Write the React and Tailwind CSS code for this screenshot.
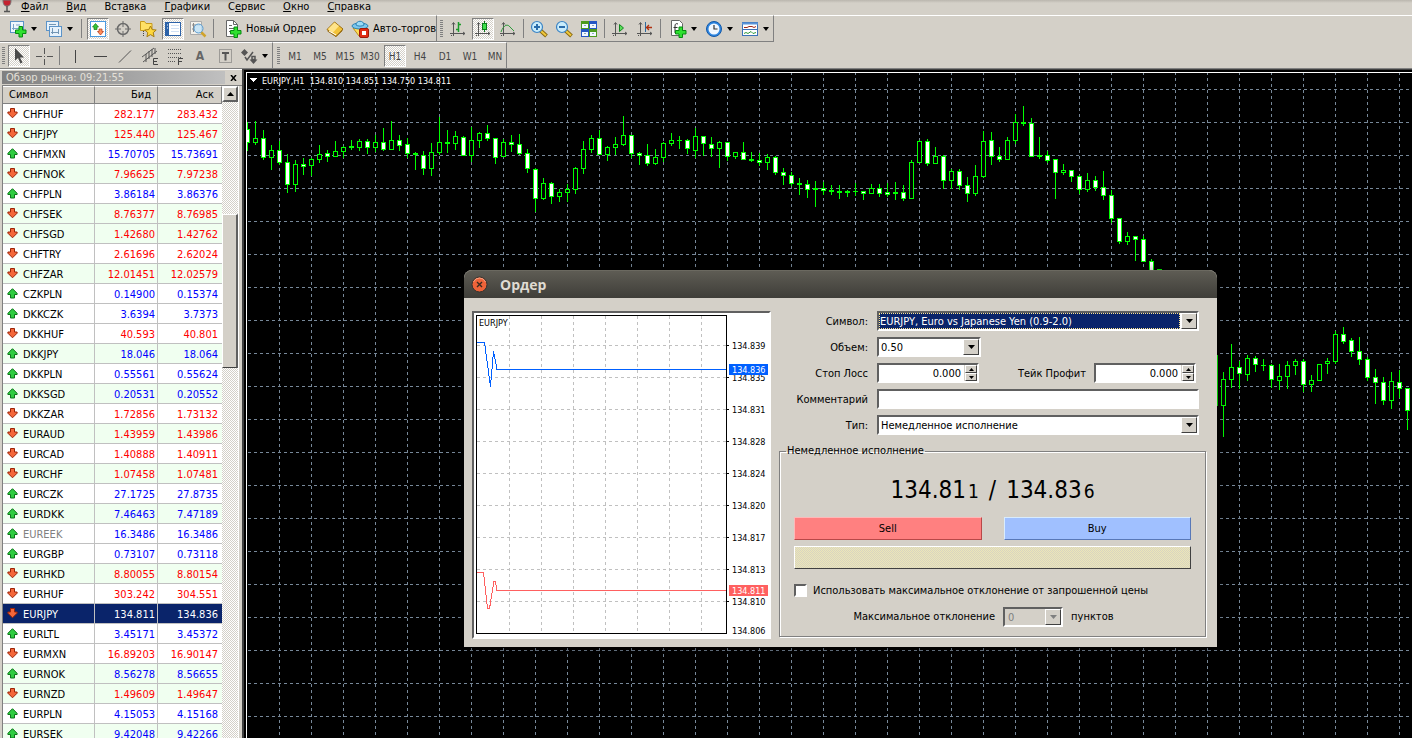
import { useState } from 'react';

// symbol, bid, ask, direction, row tint
const quotes = [
  ['CHFHUF', '282.177', '283.432', 'down', false],
  ['CHFJPY', '125.440', '125.467', 'down', true],
  ['CHFMXN', '15.70705', '15.73691', 'up', false],
  ['CHFNOK', '7.96625', '7.97238', 'down', true],
  ['CHFPLN', '3.86184', '3.86376', 'up', false],
  ['CHFSEK', '8.76377', '8.76985', 'down', true],
  ['CHFSGD', '1.42680', '1.42762', 'down', true],
  ['CHFTRY', '2.61696', '2.62024', 'down', false],
  ['CHFZAR', '12.01451', '12.02579', 'down', true],
  ['CZKPLN', '0.14900', '0.15374', 'up', false],
  ['DKKCZK', '3.6394', '3.7373', 'up', false],
  ['DKKHUF', '40.593', '40.801', 'down', false],
  ['DKKJPY', '18.046', '18.064', 'up', true],
  ['DKKPLN', '0.55561', '0.55624', 'up', false],
  ['DKKSGD', '0.20531', '0.20552', 'up', true],
  ['DKKZAR', '1.72856', '1.73132', 'down', false],
  ['EURAUD', '1.43959', '1.43986', 'down', true],
  ['EURCAD', '1.40888', '1.40911', 'down', false],
  ['EURCHF', '1.07458', '1.07481', 'down', true],
  ['EURCZK', '27.1725', '27.8735', 'up', false],
  ['EURDKK', '7.46463', '7.47189', 'up', true],
  ['EUREEK', '16.3486', '16.3486', 'up', false],
  ['EURGBP', '0.73107', '0.73118', 'up', false],
  ['EURHKD', '8.80055', '8.80154', 'down', true],
  ['EURHUF', '303.242', '304.551', 'down', false],
  ['EURJPY', '134.811', '134.836', 'down', false],
  ['EURLTL', '3.45171', '3.45372', 'up', false],
  ['EURMXN', '16.89203', '16.90147', 'down', false],
  ['EURNOK', '8.56278', '8.56655', 'up', true],
  ['EURNZD', '1.49609', '1.49647', 'down', true],
  ['EURPLN', '4.15053', '4.15168', 'up', false],
  ['EURSEK', '9.42048', '9.42266', 'up', true],
];

// [high, body top, body bottom, low, closed lower], three points to a pixel
const candles = [
  [97, 117, 159, 183, 1], [93, 144, 159, 165, 0], [120, 144, 204, 210, 1], [165, 180, 204, 240, 0],
  [152, 180, 219, 225, 1], [192, 216, 285, 309, 1], [210, 222, 285, 306, 0], [204, 222, 231, 255, 1],
  [204, 207, 228, 258, 0], [165, 192, 210, 219, 0], [180, 189, 201, 216, 1], [153, 183, 201, 201, 0],
  [168, 171, 186, 204, 0], [150, 168, 174, 180, 0], [147, 153, 174, 183, 0], [147, 153, 174, 192, 1],
  [135, 156, 174, 186, 0], [114, 156, 180, 183, 1], [93, 150, 180, 180, 0], [135, 150, 168, 183, 1],
  [144, 162, 192, 204, 1], [186, 189, 195, 240, 1], [183, 195, 237, 255, 1], [159, 186, 237, 258, 0],
  [80, 156, 189, 195, 0], [120, 156, 162, 189, 0], [123, 138, 162, 180, 0], [138, 141, 198, 198, 1],
  [110, 150, 198, 216, 0], [126, 129, 153, 174, 0], [105, 129, 147, 153, 1], [144, 144, 204, 222, 1],
  [147, 156, 201, 201, 0], [135, 156, 165, 186, 1], [132, 162, 192, 195, 1], [177, 189, 237, 249, 1],
  [234, 237, 327, 366, 1], [264, 279, 327, 330, 0], [276, 279, 321, 342, 1], [297, 306, 321, 336, 0],
  [282, 297, 309, 336, 0], [231, 234, 300, 312, 0], [153, 177, 237, 252, 0], [135, 144, 180, 189, 0],
  [120, 144, 195, 195, 1], [168, 171, 195, 213, 0], [141, 162, 174, 195, 0], [78, 135, 165, 168, 0],
  [135, 135, 192, 204, 1], [186, 189, 198, 225, 1], [162, 195, 222, 228, 1], [177, 201, 222, 225, 0],
  [156, 159, 204, 216, 0], [129, 150, 162, 168, 0], [138, 150, 153, 177, 0], [147, 150, 177, 192, 1],
  [114, 138, 183, 204, 0], [138, 138, 162, 198, 1], [141, 162, 177, 201, 1], [153, 156, 177, 234, 0],
  [156, 156, 201, 213, 1], [186, 186, 201, 207, 0], [156, 186, 210, 210, 1], [186, 207, 213, 216, 0],
  [189, 210, 219, 228, 1], [192, 201, 219, 240, 0], [198, 201, 249, 255, 1], [234, 246, 258, 285, 1],
  [246, 255, 282, 288, 1], [264, 279, 285, 315, 0], [270, 282, 300, 324, 1], [273, 294, 300, 351, 0],
  [276, 294, 303, 315, 1], [285, 300, 306, 315, 0], [285, 303, 309, 327, 0], [300, 303, 309, 321, 0],
  [279, 303, 306, 318, 0], [303, 303, 312, 330, 1], [282, 294, 312, 312, 0], [282, 294, 312, 321, 1],
  [279, 306, 315, 321, 1], [276, 306, 312, 330, 0], [285, 306, 327, 333, 1], [210, 216, 327, 327, 0],
  [150, 153, 219, 219, 0], [147, 153, 222, 228, 1], [171, 198, 222, 222, 0], [195, 198, 273, 297, 1],
  [237, 243, 273, 297, 0], [237, 243, 288, 300, 1], [261, 285, 312, 336, 1], [225, 258, 312, 318, 0],
  [123, 153, 261, 264, 0], [126, 150, 201, 225, 1], [171, 198, 210, 216, 1], [141, 150, 210, 210, 0],
  [72, 96, 153, 162, 0], [48, 96, 102, 108, 0], [84, 99, 201, 201, 1], [141, 195, 201, 207, 0],
  [183, 195, 213, 219, 1], [207, 207, 249, 327, 1], [222, 240, 249, 255, 0], [240, 240, 261, 276, 1],
  [255, 258, 300, 312, 1], [249, 270, 300, 306, 0], [258, 270, 294, 303, 1], [243, 291, 318, 330, 1],
  [300, 315, 387, 399, 1], [384, 384, 456, 462, 1], [426, 438, 456, 465, 0], [438, 438, 450, 513, 1],
  [438, 447, 516, 516, 1], [507, 513, 560, 590, 1], [537, 537, 600, 630, 0], [570, 600, 660, 690, 1],
  [630, 660, 720, 740, 1], [690, 720, 780, 800, 1], [740, 780, 810, 860, 1], [780, 800, 840, 900, 0],
  [790, 810, 860, 930, 1], [780, 795, 948, 960, 1], [846, 867, 948, 1041, 0], [762, 831, 870, 894, 0],
  [813, 831, 852, 897, 1], [795, 804, 855, 873, 0], [798, 804, 825, 846, 1], [807, 825, 828, 843, 0],
  [822, 825, 870, 894, 1], [822, 858, 873, 900, 0], [813, 825, 861, 897, 0], [807, 813, 828, 855, 0],
  [807, 813, 885, 906, 1], [855, 870, 885, 906, 0], [822, 822, 873, 873, 0], [804, 813, 822, 852, 0],
  [723, 732, 816, 822, 0], [711, 732, 756, 762, 1], [744, 750, 786, 801, 1], [741, 783, 810, 825, 1],
  [801, 807, 864, 873, 1], [837, 861, 879, 942, 1], [861, 876, 933, 945, 1], [846, 873, 933, 957, 0],
  [840, 876, 897, 924, 1], [894, 894, 963, 1020, 1],
];

const menus = [
  ['', 'Ф', 'айл'],
  ['', 'В', 'ид'],
  ['Вст', 'а', 'вка'],
  ['', 'Г', 'рафики'],
  ['С', 'е', 'рвис'],
  ['', 'О', 'кно'],
  ['', 'С', 'правка'],
];

const periods = ['M1', 'M5', 'M15', 'M30', 'H1', 'H4', 'D1', 'W1', 'MN'];

const Icon = ({ children, size = 18 }) => (
  <svg width={size} height={size} viewBox={`0 0 ${size} ${size}`} fill="none" className="shrink-0" aria-hidden="true">
    {children}
  </svg>
);

const Plus = ({ x, y }) => (
  <path
    transform={`translate(${x} ${y})`}
    d="M4 .5h3.500v3.500H11v3.500H7.500V11H4V7.500H.5V4H4z"
    fill="#2fe02f"
    stroke="#078a10"
  />
);

const Caret = () => (
  <svg width="7" height="4" viewBox="0 0 7 4" className="shrink-0" aria-hidden="true">
    <path d="M0 0h6L3 4z" fill="#000" />
  </svg>
);

const Grip = () => (
  <div className="my-1 w-[3px] bg-[repeating-linear-gradient(#808080_0_1px,#d4d0c8_1px_2px)]" />
);

const Sep = () => <div className="mx-1 my-[3px] w-px shrink-0 bg-[#808080]" />;

const Tool = ({ label, pressed, wide, children }) => (
  <button
    type="button"
    aria-label={label}
    aria-pressed={pressed}
    className={
      'flex shrink-0 items-center justify-center gap-[4px] self-center h-[22px] ' +
      (wide ? 'w-9 ' : 'w-[22px] ') +
      (pressed
        ? 'border border-t-[#808080] border-l-[#808080] border-r-white border-b-white bg-[conic-gradient(#fff_25%,#d4d0c8_0_50%,#fff_0_75%,#d4d0c8_0)] bg-[length:2px_2px]'
        : '')
    }
  >
    {children}
    {wide && <Caret />}
  </button>
);

const Axes = () => (
  <path d="M4.500 3v13M1 13.500h15M3 4.500l1.500-2 1.500 2M14 12l2 1.500-2 1.500M2 15.500h1" stroke="#555" />
);

const Magnifier = ({ sign }) => (
  <Icon>
    <path d="M10.500 10.500l6 5.500" stroke="#8a6a10" strokeWidth="4" />
    <path d="M11 11l5 4.500" stroke="#f0c83c" strokeWidth="2" />
    <circle cx="7" cy="7" r="5.500" fill="#c9ecfb" stroke="#3b83c4" strokeWidth="1.200" />
    <path d={sign === '+' ? 'M4 7h6M7 4v6' : 'M4 7h6'} stroke="#2a6cab" strokeWidth="2" />
  </Icon>
);

const MenuBar = () => (
  <nav className="flex h-[15px] shrink-0 items-start gap-[2px] bg-linear-to-b from-[#bab6ae] to-[#d4d0c8] to-20% text-[11px] leading-[13px]">
    <svg width="14" height="13" viewBox="0 0 14 13" className="mr-[-3px]" aria-hidden="true">
      <path d="M3 0h8c0 4-1 6-4 6S3 4 3 0z" fill="#c5222f" stroke="#777" />
      <path d="M7 6v5M4 11.500h6" stroke="#555" strokeWidth="1.500" />
    </svg>
    {menus.map(([before, key, after]) => (
      <a key={key + after} href="#" className="px-2">
        {before}
        <span className="underline">{key}</span>
        {after}
      </a>
    ))}
  </nav>
);

const MainToolbar = () => (
  <div className="flex h-[27px] shrink-0">
    <div className="flex w-[437px] overflow-hidden border-y border-r border-t-white border-r-[#808080] border-b-[#808080] pl-[2px]">
      <Grip />
      <div className="flex pl-[3px]">
        <Tool label="Новый график" wide>
          <Icon>
            <rect x="1.500" y="1.500" width="13" height="11" fill="#eef6fd" stroke="#5b93c8" />
            <path d="M4.500 4v6M3 8.500h8M7 5h4" stroke="#7aa3c8" />
            <Plus x={6} y={6} />
          </Icon>
        </Tool>
        <Tool label="Профили" wide>
          <Icon>
            <rect x="1.500" y="1.500" width="12" height="9" fill="#e6f2fc" stroke="#5b93c8" />
            <rect x="4.500" y="6.500" width="12" height="10" fill="#e6f2fc" stroke="#5b93c8" />
            <path d="M4 4.500h7M7.500 8v6M6 12.500h8M13.500 9v5" stroke="#7296b5" />
          </Icon>
        </Tool>
      </div>
      <Sep />
      <div className="flex gap-[3px] pl-px">
        <Tool label="Обзор рынка" pressed>
          <Icon>
            <rect x="1.500" y="1.500" width="15" height="15" fill="#fff" stroke="#4a9ae0" />
            <path d="M6.500 3.500l3 3.500H8v2.500H5V7H3.500z" fill="#35c535" stroke="#157a15" strokeWidth=".7" />
            <path d="M11.500 15L8.500 11.500H10V9h3v2.500h1.500z" fill="#ff8c5a" stroke="#b03010" strokeWidth=".7" />
          </Icon>
        </Tool>
        <Tool label="Окно данных">
          <Icon>
            <circle cx="9" cy="9" r="5.500" stroke="#6a6a6a" strokeWidth="1.500" />
            <path d="M9 1v6M9 11v6M1 9h6M11 9h6" stroke="#6a6a6a" />
          </Icon>
        </Tool>
        <Tool label="Навигатор">
          <Icon>
            <path d="M1.500 10.500v-9h4l1.500 2h6v7z" fill="#ffe066" stroke="#c79a1c" />
            <path d="M4.500 11v6" stroke="#444" strokeDasharray="1 1" />
            <path d="M11.500 6l1.700 3.600 4 .4-3 2.700.9 4-3.600-2.100-3.600 2.100.9-4-3-2.700 4-.4z" fill="#ffd83c" stroke="#a67c10" />
          </Icon>
        </Tool>
        <Tool label="Терминал" pressed>
          <Icon>
            <rect x="1.500" y="2.500" width="15" height="13" fill="#fff" stroke="#2c62a8" />
            <path d="M3.500 3v12" stroke="#2c62a8" strokeWidth="3" />
            <path d="M7 5.500h8M7 8.500h8M7 11.500h8" stroke="#d0e0f4" />
            <path d="M3 5h1M3 8h1" stroke="#fff" />
          </Icon>
        </Tool>
        <Tool label="Тестер стратегий">
          <Icon>
            <path d="M1.500 1.500h11v13h-11z" fill="#f4f1ea" stroke="#aaa" />
            <path d="M3 5h8M3 9h3M4.500 3v9" stroke="#888" />
            <path d="M12 12l4.500 4.500" stroke="#d0a32c" strokeWidth="2.500" />
            <circle cx="9.500" cy="8.500" r="4.500" fill="#bfe2f7" fillOpacity=".8" stroke="#5a9ace" />
          </Icon>
        </Tool>
      </div>
      <Sep />
      <button type="button" className="flex shrink-0 items-center gap-1 pt-px pr-1 pl-[6px] text-[11px]">
        <Icon>
          <path d="M2.500.5h7l4 4v12h-11z" fill="#fff" stroke="#666" />
          <path d="M9.500.5v4h4M5 5.500h3M5 8.500h6M5 11.500h4" stroke="#666" />
          <Plus x={6} y={6.500} />
        </Icon>
        Новый Ордер
      </button>
      <div className="flex pl-1">
        <Tool label="Редактор">
          <Icon>
            <path d="M1 9.500L8.500 2 17 9l-7 7.500z" fill="#f2c33a" stroke="#9a6c10" />
            <path d="M2 9l6.500-6.500L13 6l-6.500 7z" fill="#ffe48a" />
            <path d="M1.500 11l8.500 5.500 6.500-6" stroke="#9a6c10" />
            <path d="M3 11l7 4" stroke="#fff" />
          </Icon>
        </Tool>
      </div>
      <button type="button" className="flex shrink-0 items-center gap-1 pt-px pl-[5px] text-[11px] whitespace-nowrap">
        <Icon>
          <path d="M2 8h14l-4 8H8z" fill="#ffdf58" stroke="#b98d1c" />
          <ellipse cx="9" cy="6" rx="8" ry="3" fill="#7cc6ec" stroke="#2b82b5" />
          <path d="M5 5c0-5 8-5 8 0-2 1.500-6 1.500-8 0z" fill="#9bdaf6" stroke="#2b82b5" />
          <rect x="8.500" y="8.500" width="9" height="9" rx="1.500" fill="#e02c14" stroke="#a01808" />
          <rect x="11" y="11" width="4" height="4" fill="#fff" />
        </Icon>
        Авто-торговля
      </button>
    </div>
    <div className="flex border-y border-r border-t-white border-r-[#808080] border-b-[#808080] pl-[3px]">
      <Grip />
      <div className="flex gap-[3px] pl-1">
        <Tool label="Бары">
          <Icon>
            <Axes />
            <path d="M9.500 2v10M7 9.500h2M10 4.500h2" stroke="#1b9a2a" strokeWidth="1.500" />
          </Icon>
        </Tool>
        <Tool label="Свечи" pressed>
          <Icon>
            <Axes />
            <path d="M10.500 1v11" stroke="#0a7a1a" />
            <rect x="8.500" y="3.500" width="4" height="6" fill="#3de04a" stroke="#0a7a1a" />
          </Icon>
        </Tool>
        <Tool label="Линия">
          <Icon>
            <Axes />
            <path d="M2 12c3-8 7-8 9-5l4 4" stroke="#2f9a3a" />
          </Icon>
        </Tool>
      </div>
      <Sep />
      <div className="flex gap-[3px]">
        <Tool label="Увеличить"><Magnifier sign="+" /></Tool>
        <Tool label="Уменьшить"><Magnifier sign="-" /></Tool>
        <Tool label="Мозаика">
          <Icon>
            <path d="M1 1h8v8H1zM9 9h8v8H9z" fill="#4c9a1c" />
            <path d="M9 1h8v8H9zM1 9h8v8H1z" fill="#2456c4" />
            <path d="M2 4h6v4H2zM10 4h6v4h-6zM2 12h6v4H2zM10 12h6v4h-6z" fill="#f2f8ff" />
            <path d="M4 5.500h2M12 5.500h2M4 13.500h2M12 13.500h2" stroke="#8ab" />
          </Icon>
        </Tool>
      </div>
      <Sep />
      <div className="flex gap-[3px]">
        <Tool label="Автопрокрутка">
          <Icon>
            <Axes />
            <path d="M8.500 4.500l4 3.500-4 3.500z" fill="#5adf5a" stroke="#12851e" />
          </Icon>
        </Tool>
        <Tool label="Сдвиг графика">
          <Icon>
            <Axes />
            <path d="M9.500 2v10" stroke="#2c6aa0" />
            <path d="M16 7.500h-5M13 5l-2.500 2.500L13 10" stroke="#b03010" strokeWidth="1.300" />
          </Icon>
        </Tool>
      </div>
      <Sep />
      <div className="flex">
        <Tool label="Индикаторы" wide>
          <Icon>
            <path d="M2.500.5h8l3 3v12h-11z" fill="#fff" stroke="#666" />
            <path d="M9 4c-2-1-3 0-3 2v7M4.500 7.500h4" stroke="#333" />
            <Plus x={6} y={6.500} />
          </Icon>
        </Tool>
        <Tool label="Периоды" wide>
          <Icon>
            <circle cx="9" cy="9" r="7.500" fill="#2e86e0" stroke="#1358a8" />
            <circle cx="9" cy="9" r="5.500" fill="#f2f8ff" />
            <path d="M9 5v4h3.500" stroke="#333" strokeWidth="1.200" />
          </Icon>
        </Tool>
        <Tool label="Шаблоны" wide>
          <Icon>
            <rect x="1.500" y="2.500" width="15" height="13" fill="#fff" stroke="#3a72b8" />
            <path d="M1 3.500h16" stroke="#5a94d8" strokeWidth="2" />
            <path d="M2 9.500h14" stroke="#3a72b8" />
            <path d="M3 7.500h3l2-1h3l2 1 2-1" stroke="#a02818" />
            <path d="M3 13.500l2-1 2 1 3-2 2 2 3-1" stroke="#2f9a3a" />
          </Icon>
        </Tool>
      </div>
    </div>
    <div className="flex-1 border-t border-white" />
  </div>
);

const DrawToolbar = () => {
  const [period, setPeriod] = useState('H1');

  return (
    <div className="flex h-[27px] shrink-0 border-b border-b-[#808080]">
      <div className="flex border-t border-r border-t-white border-r-[#808080] pl-[2px]">
        <Grip />
        <div className="flex gap-[3px] pl-[3px]">
          <Tool label="Курсор" pressed>
            <Icon>
              <path d="M5 1v12.500l3-2.500 2.500 5.500 2-1L10 10.500h4z" fill="#4a4a4a" />
            </Icon>
          </Tool>
          <Tool label="Перекрестие">
            <Icon>
              <path d="M9.500 1v6M9.500 12v6M1 9.500h6M12 9.500h6M9 9.500h1" stroke="#555" />
            </Icon>
          </Tool>
        </div>
        <Sep />
        <div className="flex gap-[3px]">
          <Tool label="Вертикальная линия">
            <Icon><path d="M9.500 3v13" stroke="#444" /></Icon>
          </Tool>
          <Tool label="Горизонтальная линия">
            <Icon><path d="M3 9.500h13" stroke="#444" /></Icon>
          </Tool>
          <Tool label="Трендовая линия">
            <Icon><path d="M3 15.500L15 3.500" stroke="#555" /></Icon>
          </Tool>
          <Tool label="Канал">
            <Icon>
              <path d="M1 10L13 1M2 15L16 4M5 7v8M8 4v8M11 2v8M14 1v6" stroke="#555" />
              <path d="M17 11.500h-4.500v6H17M13 14.500h3" stroke="#444" />
            </Icon>
          </Tool>
          <Tool label="Фибоначчи">
            <Icon>
              <path d="M2 2.500h14M2 6.500h14M2 10.500h14M2 14.500h8" stroke="#555" strokeDasharray="1 1" />
              <path d="M12.500 18v-6.500H17M13 14.500h3" stroke="#444" />
            </Icon>
          </Tool>
          <button type="button" className="w-[22px] pt-px text-[12px] font-bold text-[#666]">A</button>
          <Tool label="Метка">
            <Icon>
              <rect x="3.500" y="2.500" width="12" height="13" stroke="#666" strokeDasharray="1 1" />
              <path d="M6 6h7M9.500 6v7.500" stroke="#555" strokeWidth="2" />
            </Icon>
          </Tool>
        </div>
        <Tool label="Стрелки" wide>
          <Icon>
            <path d="M1 5.500L4.500 2 8 5.500 4.500 9zM9.500 12.500h8L13.500 17z" fill="#555" />
            <path d="M5 10l2 3 6-8M12 9.500h3v3h-3z" stroke="#555" strokeWidth="1.500" />
          </Icon>
        </Tool>
      </div>
      <div className="flex border-t border-r border-t-white border-r-[#808080] pl-1">
        <Grip />
        <div className="flex items-center gap-[3px] pl-1">
          {periods.map((p) => (
            <button
              key={p}
              type="button"
              aria-pressed={p === period}
              onClick={() => setPeriod(p)}
              className={
                'flex h-[22px] w-[22px] items-center justify-center pt-px text-[10px] text-[#444] ' +
                (p === period
                  ? 'border border-t-[#808080] border-l-[#808080] border-r-white border-b-white bg-[conic-gradient(#fff_25%,#d4d0c8_0_50%,#fff_0_75%,#d4d0c8_0)] bg-[length:2px_2px]'
                  : '')
              }
            >
              {p}
            </button>
          ))}
        </div>
      </div>
    </div>
  );
};

const QuoteArrow = ({ dir }) => (
  <svg width="11" height="11" viewBox="0 0 11 11" className="shrink-0" aria-hidden="true">
    {dir === 'up' ? (
      <path d="M5.500.7l4.600 4.600v1.200H7.500v3.500h-4V6.500H.9V5.300z" fill="#2ecc40" stroke="#0b7418" />
    ) : (
      <path d="M5.500 9.800L.9 5.200V4h2.600V.5h4V4h2.600v1.200z" fill="#f4673a" stroke="#9c2408" />
    )}
  </svg>
);

const MarketWatch = () => {
  const [selected, setSelected] = useState('EURJPY');
  const head = 'h-[17px] border-t border-r border-b border-t-white border-r-[#808080] border-b-[#808080] pt-0 pb-[2px] font-normal';

  return (
    <aside className="flex w-[242px] shrink-0 flex-col border-t border-white pt-px pl-[2px]">
      <div className="flex h-[13px] items-center text-[11px] leading-[13px]">
        <h2 className="w-[223px] bg-linear-to-r from-[#808080] to-[#c0c0c0] pl-1 text-[#e4e0d8]">Обзор рынка: 09:21:55</h2>
        <button type="button" aria-label="Закрыть" className="flex flex-1 items-center justify-center">
          <svg width="7" height="6" viewBox="0 0 7 6" aria-hidden="true">
            <path d="M1 0l5 6M6 0L1 6" stroke="#000" strokeWidth="1.500" />
          </svg>
        </button>
      </div>
      <div className="mt-px flex min-h-0 flex-1 overflow-hidden border-t border-l border-[#808080]">
        <div className="w-[219px] overflow-hidden bg-white">
          <table className="w-full table-fixed border-separate border-spacing-0 text-[11px] leading-[13px]">
            <colgroup>
              <col className="w-[92px]" />
              <col className="w-[63px]" />
              <col />
            </colgroup>
            <thead>
              <tr className="h-[18px] bg-[#d4d0c8]">
                <th className={head + ' pl-[6px] text-left'}>Символ</th>
                <th className={head + ' pr-[6px] text-right'}>Бид</th>
                <th className={head + ' pr-[7px] text-right'}>Аск</th>
              </tr>
            </thead>
            <tbody>
              {quotes.map(([symbol, bid, ask, dir, tint]) => {
                const active = symbol === selected;
                const color = active ? 'text-white' : dir === 'up' ? 'text-[#0000ff]' : 'text-[#ff0000]';
                return (
                  <tr
                    key={symbol}
                    onClick={() => setSelected(symbol)}
                    className={'h-5 ' + (active ? 'bg-[#0a246a] ' : tint ? 'bg-[#f0fff0] ' : 'bg-white ')}
                  >
                    <td className="h-5 border-r border-b border-[#c0c0c0] p-0 pt-[2px] pl-[4px]">
                      <span
                        className={
                          'flex items-start gap-[5px] ' +
                          (active ? 'text-white' : symbol === 'EUREEK' ? 'text-[#808080]' : 'text-black')
                        }
                      >
                        <QuoteArrow dir={dir} />
                        {symbol}
                      </span>
                    </td>
                    <td className={'border-r border-b border-[#c0c0c0] p-0 pt-[2px] pr-[2px] text-right ' + color}>{bid}</td>
                    <td className={'border-b border-[#c0c0c0] p-0 pt-[2px] pr-[4px] text-right ' + color}>{ask}</td>
                  </tr>
                );
              })}
            </tbody>
          </table>
        </div>
        <div className="flex w-4 flex-col bg-[conic-gradient(#fff_25%,#d4d0c8_0_50%,#fff_0_75%,#d4d0c8_0)] bg-[length:2px_2px]">
          <button
            type="button"
            aria-label="Вверх"
            className="flex h-4 items-center justify-center border-2 border-t-white border-r-[#606060] border-b-[#606060] border-l-white bg-[#d4d0c8]"
          >
            <svg width="7" height="4" viewBox="0 0 7 4" aria-hidden="true">
              <path d="M0 4h7L3.500 0z" />
            </svg>
          </button>
          <div className="mt-28 h-[154px] border-t border-r-2 border-b border-l border-t-white border-r-[#606060] border-b-[#404040] border-l-white bg-[#d4d0c8]" />
        </div>
        <div className="flex-1 border-l border-white bg-[#d4d0c8]" />
      </div>
    </aside>
  );
};

const PriceChart = () => (
  <main className="flex min-w-0 flex-1 border-t border-l-2 border-[#404040] bg-black pt-[2px] pl-[2px]">
    <div className="min-w-0 flex-1 overflow-hidden border-t border-l border-white">
      <svg width="100%" height="100%" shapeRendering="crispEdges">
        <g stroke="#778899" strokeDasharray="3 3">
          {Array.from({ length: 60 }, (_, i) => (
            <line key={'v' + i} x1={32.5 + i * 32} x2={32.5 + i * 32} y1="-1" y2="100%" />
          ))}
          {Array.from({ length: 40 }, (_, i) => (
            <line key={'h' + i} x1="1" x2="100%" y1={16.5 + i * 33} y2={16.5 + i * 33} />
          ))}
        </g>
        {candles.map(([high, top, bottom, low, down], i) => {
          const y = (v) => 17 + Math.round(v / 3);
          const x = i * 8;
          const h = y(bottom) - y(top);
          return (
            <g key={i}>
              <rect x={x} y={y(high)} width="1" height={y(low) - y(high)} fill="#00ff00" />
              <rect x={x - 2} y={y(top)} width="5" height={h} fill="#00ff00" />
              {h > 2 && <rect x={x - 1} y={y(top) + 1} width="3" height={h - 2} fill={down ? '#fff' : '#000'} />}
            </g>
          );
        })}
        <path d="M2 5h8l-4 4z" fill="#fff" />
        <text x="15" y="11" fill="#fff" xmlSpace="preserve" className="text-[9px]">
          {'EURJPY,H1  134.810 134.851 134.750 134.811'}
        </text>
      </svg>
    </div>
  </main>
);

const ticks = ['134.839', '134.835', '134.831', '134.828', '134.824', '134.820', '134.817', '134.813', '134.810'];

const TickChart = () => (
  <div className="h-[328px] w-[299px] shrink-0 border-2 border-t-[#606060] border-r-white border-b-white border-l-[#606060] bg-white">
    <svg width="295" height="324" className="block text-[9px]" shapeRendering="crispEdges">
      <g stroke="#c0c0c0" strokeDasharray="3 3">
        {[35, 67, 99, 131, 163, 195, 227].map((x) => (
          <line key={x} x1={x + 0.5} x2={x + 0.5} y1="3" y2="321" />
        ))}
        {ticks.map((t, i) => (
          <line key={t} x1="3" x2="252" y1={32.5 + i * 32} y2={32.5 + i * 32} />
        ))}
      </g>
      <rect x="2.500" y="2.500" width="250" height="318" fill="none" stroke="#000" />
      <text x="5" y="13">EURJPY</text>
      {ticks.map((t, i) => (
        <g key={t}>
          <path d={`M253 ${32.5 + i * 32}h2`} stroke="#000" />
          <text x="258" y={36 + i * 32}>{t}</text>
        </g>
      ))}
      <text x="258" y="321">134.806</text>
      <path d="M3 29.500h7.500l6 44 3-35 3.500 18H252" fill="none" stroke="#0060ff" />
      <path d="M3 259.500h6.500l4 36h2l4.500-27h1.500l1.500 9H252" fill="none" stroke="#ff6060" />
      <rect x="255" y="51" width="39" height="11" fill="#0060ff" />
      <text x="258" y="60" fill="#fff">134.836</text>
      <rect x="255" y="272" width="39" height="11" fill="#ff6060" />
      <text x="258" y="281" fill="#fff">134.811</text>
    </svg>
  </div>
);

const sunken = 'border-2 border-t-[#606060] border-l-[#606060] border-r-white border-b-white ';

const Select = ({ id, className, highlight, disabled, children }) => (
  <div className={'relative flex h-5 ' + sunken + className}>
    <select
      id={id}
      disabled={disabled}
      className={
        'w-full appearance-none pt-px text-[11px] leading-[14px] ' +
        (highlight
          ? 'mr-[17px] border border-dotted border-[#ffe48a] bg-[#0a246a] text-white'
          : disabled
            ? 'bg-[#d4d0c8] pl-[3px] text-[#808080]'
            : 'bg-white pl-[2px] text-black')
      }
    >
      {children}
    </select>
    <span className="pointer-events-none absolute top-0 right-0 flex h-4 w-4 items-center justify-center border border-t-white border-r-[#404040] border-b-[#404040] border-l-white bg-[#d4d0c8]">
      <svg width="7" height="4" viewBox="0 0 7 4" aria-hidden="true">
        <path d="M0 0h7L3.500 4z" fill={disabled ? '#808080' : '#000'} />
      </svg>
    </span>
  </div>
);

const Spinner = ({ id }) => (
  <div className={'flex h-5 w-[102px] bg-[#d4d0c8] ' + sunken}>
    <input id={id} defaultValue="0.000" className="min-w-0 flex-1 bg-white pt-px pr-[3px] text-right text-[11px]" />
    <div className="flex w-[13px] flex-col pl-px">
      {['M0 3h5L2.500 0z', 'M0 0h5L2.500 3z'].map((d, i) => (
        <button
          key={d}
          type="button"
          aria-label={i ? 'Меньше' : 'Больше'}
          className="flex h-2 items-center justify-center border border-t-white border-r-[#404040] border-b-[#404040] border-l-white"
        >
          <svg width="5" height="3" viewBox="0 0 5 3" aria-hidden="true">
            <path d={d} />
          </svg>
        </button>
      ))}
    </div>
  </div>
);

const OrderDialog = () => (
  <section className="absolute top-[270px] left-[464px] rounded-t-lg bg-[#d4d0c8] text-[11px] leading-[14px] shadow-[0_2px_12px_rgba(0,0,0,0.5)]">
    <header className="flex h-7 items-center gap-3 rounded-t-lg border-t border-[#6b6960] bg-linear-to-b from-[#5e5c54] to-[#3f3e39] pl-[7px]">
      <button type="button" aria-label="Закрыть">
        <svg width="17" height="17" viewBox="0 0 17 17" className="block" aria-hidden="true">
          <circle cx="8.500" cy="8.500" r="7.500" fill="#ee6339" stroke="#33322e" />
          <path d="M2.500 6a6.500 6.500 0 0 1 12 0" stroke="#f7a183" fill="none" />
          <path d="M6 6l5 5M11 6l-5 5" stroke="#3a2a20" strokeWidth="1.400" />
        </svg>
      </button>
      <h1 className="pt-px font-['Open_Sans',sans-serif] text-[14px] font-bold text-[#dfdbd2]">Ордер</h1>
    </header>
    <div className="flex gap-2 pt-[13px] pr-[11px] pb-[8px] pl-2">
      <TickChart />
      <form className="w-[427px]" onSubmit={(e) => e.preventDefault()}>
        <div className="grid grid-cols-[89px_1fr] items-center gap-x-[9px] gap-y-[6px] pr-[7px]">
          <label htmlFor="symbol" className="pt-px text-right">Символ:</label>
          <Select id="symbol" highlight className="w-full bg-white">
            <option>EURJPY, Euro vs Japanese Yen (0.9-2.0)</option>
          </Select>
          <label htmlFor="volume" className="pt-px text-right">Объем:</label>
          <Select id="volume" className="w-[104px]">
            <option>0.50</option>
          </Select>
          <label htmlFor="sl" className="pt-px text-right">Стоп Лосс</label>
          <div className="flex items-center justify-between pr-[3px]">
            <Spinner id="sl" />
            <div className="flex items-center gap-2">
              <label htmlFor="tp" className="pt-px">Тейк Профит</label>
              <Spinner id="tp" />
            </div>
          </div>
          <label htmlFor="comment" className="pt-px text-right">Комментарий</label>
          <input id="comment" className={'h-5 w-full bg-white px-1 ' + sunken} />
          <label htmlFor="type" className="pt-px text-right">Тип:</label>
          <Select id="type" className="w-full">
            <option>Немедленное исполнение</option>
          </Select>
        </div>
        <fieldset className="mt-[9px] border border-[#808080] px-[14px] pb-[9px] shadow-[1px_1px_0_#fff,inset_1px_1px_0_#fff]">
          <legend className="ml-[-8px] px-px">Немедленное исполнение</legend>
          <p className="flex items-baseline justify-center pt-[19px] pb-[13px] text-[24px] leading-[26px]">
            134.81<span className="pl-[2px] text-[19px]">1</span>
            <span className="px-[10px]">/</span>
            134.83<span className="pl-[2px] text-[19px]">6</span>
          </p>
          <div className="flex gap-[22px]">
            <button
              type="button"
              className="h-[23px] flex-1 border border-t-[#ffb8b8] border-r-[#b84848] border-b-[#b84848] border-l-[#ffb8b8] bg-[#ff8080]"
            >
              Sell
            </button>
            <button
              type="button"
              className="h-[23px] flex-1 border border-t-[#d8ecff] border-r-[#5878b8] border-b-[#5878b8] border-l-[#d8ecff] bg-[#a0c0ff]"
            >
              Buy
            </button>
          </div>
          <div className="mt-[6px] h-[23px] border border-t-white border-r-[#404040] border-b-[#404040] border-l-white bg-[conic-gradient(#ece6b8_25%,#d8d4c0_0_50%,#ece6b8_0_75%,#d8d4c0_0)] bg-[length:2px_2px]" />
          <div className="mt-[14px] flex items-center gap-[6px]">
            <input
              id="deviate"
              type="checkbox"
              className="h-[13px] w-[13px] appearance-none border-2 border-t-[#606060] border-r-white border-b-white border-l-[#606060] bg-white checked:bg-black"
            />
            <label htmlFor="deviate" className="pt-px">Использовать максимальное отклонение от запрошенной цены</label>
          </div>
          <div className="mt-[9px] flex items-center justify-center gap-2 pr-[18px]">
            <label htmlFor="deviation">Максимальное отклонение</label>
            <Select id="deviation" disabled className="w-[60px]">
              <option>0</option>
            </Select>
            <span>пунктов</span>
          </div>
        </fieldset>
      </form>
    </div>
  </section>
);

const App = () => (
  <div className="relative flex h-screen flex-col overflow-hidden bg-[#d4d0c8] font-['DejaVu_Sans_Condensed','DejaVu_Sans',sans-serif] text-black">
    <MenuBar />
    <MainToolbar />
    <DrawToolbar />
    <div className="flex min-h-0 flex-1">
      <MarketWatch />
      <PriceChart />
    </div>
    <OrderDialog />
  </div>
);

export default App;
